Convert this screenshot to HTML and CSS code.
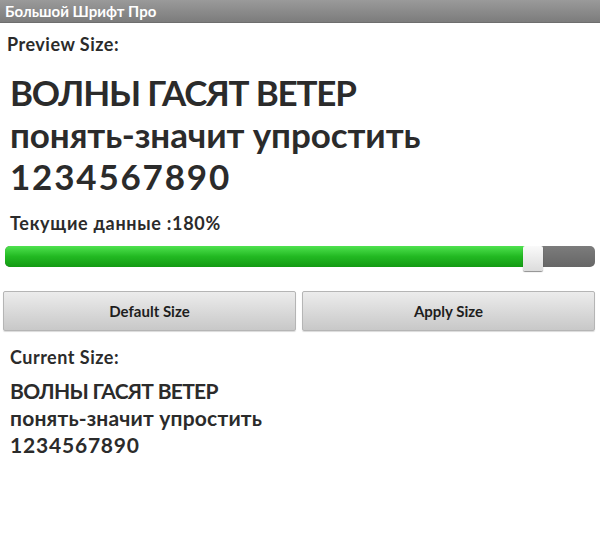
FILE: index.html
```html
<!DOCTYPE html>
<html>
<head>
<meta charset="utf-8">
<link rel="stylesheet" href="styles.css">
</head>
<body>
<div class="titlebar">Большой Шрифт Про</div>
<div class="content">
  <div class="label label-preview">Preview Size:</div>
  <div class="sample preview">
    <div class="line caps">ВОЛНЫ ГАСЯТ ВЕТЕР</div>
    <div class="line lower">понять-значит упростить</div>
    <div class="line digits">1234567890</div>
  </div>
  <div class="label label-current-data">Текущие данные :180%</div>
  <div class="slider">
    <div class="track">
      <div class="fill" style="width: 88.5%"></div>
    </div>
    <div class="thumb" style="left: calc(88.5% - 4px)"></div>
  </div>
  <div class="buttons">
    <div class="btn">Default Size</div>
    <div class="btn">Apply Size</div>
  </div>
  <div class="label label-current">Current Size:</div>
  <div class="sample current">
    <div class="line caps">ВОЛНЫ ГАСЯТ ВЕТЕР</div>
    <div class="line lower">понять-значит упростить</div>
    <div class="line digits">1234567890</div>
  </div>
</div>
</body>
</html>
```
FILE: styles.css
```css
html, body {
  margin: 0;
  padding: 0;
  background: #ffffff;
}
body {
  width: 600px;
  height: 546px;
  overflow: hidden;
  font-family: Lato, "Open Sans", sans-serif;
  color: #2b2b2b;
}
.titlebar {
  height: 22px;
  background: linear-gradient(#9a9a9a, #7c7c7c);
  color: #ffffff;
  font-size: 15px;
  font-weight: 700;
  line-height: 22px;
  padding-left: 5px;
  border-bottom: 1px solid #6e6e6e;
}
.content {
  padding: 0 5px 0 3px;
}
.label {
  font-size: 18px;
  font-weight: 700;
  line-height: 22px;
  letter-spacing: 0.5px;
}
.label-preview {
  margin-top: 10px;
  padding-left: 4px;
}
.sample {
  font-weight: 700;
  padding-left: 7px;
}
.preview {
  margin-top: 16px;
  font-size: 35px;
  line-height: 42px;
}
.preview .caps { letter-spacing: -1.2px; }
.preview .lower { letter-spacing: -0.1px; }
.preview .digits { letter-spacing: 1.8px; }
.label-current-data {
  margin-top: 15px;
  padding-left: 7px;
  letter-spacing: 0.7px;
}
.slider {
  position: relative;
  margin: 12px 0 0 2px;
  height: 26px;
}
.track {
  height: 21px;
  border-radius: 5px;
  background: linear-gradient(#7c7c7c, #666666);
  overflow: hidden;
}
.fill {
  height: 100%;
  background: linear-gradient(#4fe24f, #22b922 50%, #139a13);
}
.thumb {
  position: absolute;
  top: 0;
  width: 20px;
  height: 25px;
  border-radius: 2px;
  background: linear-gradient(#fafafa, #dcdcdc);
  box-shadow: 0 1px 1px rgba(0,0,0,0.45);
}
.buttons {
  display: grid;
  grid-template-columns: 1fr 1fr;
  gap: 6px;
  margin-top: 19px;
}
.btn {
  height: 38px;
  border: 1px solid #b5b5b5;
  border-radius: 2px;
  background: linear-gradient(#ececec, #c8c8c8);
  display: flex;
  align-items: center;
  justify-content: center;
  font-size: 15px;
  font-weight: 700;
  color: #1e1e1e;
  box-shadow: 0 1px 1px rgba(0,0,0,0.15);
}
.label-current {
  margin-top: 15px;
  padding-left: 7px;
}
.current {
  margin-top: 9px;
  font-size: 21px;
  line-height: 27px;
}
.current .caps { letter-spacing: -0.7px; }
.current .lower { letter-spacing: 0.2px; }
.current .digits { letter-spacing: 0.8px; }
```
